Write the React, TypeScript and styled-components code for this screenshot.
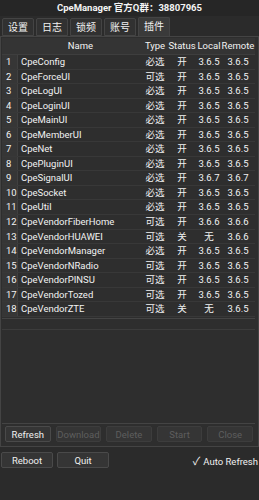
import React from "react";
import styled, { createGlobalStyle } from "styled-components";

interface PluginRow {
  name: string;
  type: string;
  status: string;
  local: string;
  remote: string;
}

const PLUGINS: PluginRow[] = [
  { name: "CpeConfig", type: "必选", status: "开", local: "3.6.5", remote: "3.6.5" },
  { name: "CpeForceUI", type: "可选", status: "开", local: "3.6.5", remote: "3.6.5" },
  { name: "CpeLogUI", type: "必选", status: "开", local: "3.6.5", remote: "3.6.5" },
  { name: "CpeLoginUI", type: "必选", status: "开", local: "3.6.5", remote: "3.6.5" },
  { name: "CpeMainUI", type: "必选", status: "开", local: "3.6.5", remote: "3.6.5" },
  { name: "CpeMemberUI", type: "必选", status: "开", local: "3.6.5", remote: "3.6.5" },
  { name: "CpeNet", type: "必选", status: "开", local: "3.6.5", remote: "3.6.5" },
  { name: "CpePluginUI", type: "必选", status: "开", local: "3.6.5", remote: "3.6.5" },
  { name: "CpeSignalUI", type: "必选", status: "开", local: "3.6.7", remote: "3.6.7" },
  { name: "CpeSocket", type: "必选", status: "开", local: "3.6.5", remote: "3.6.5" },
  { name: "CpeUtil", type: "必选", status: "开", local: "3.6.5", remote: "3.6.5" },
  { name: "CpeVendorFiberHome", type: "可选", status: "开", local: "3.6.6", remote: "3.6.6" },
  { name: "CpeVendorHUAWEI", type: "可选", status: "关", local: "无", remote: "3.6.6" },
  { name: "CpeVendorManager", type: "必选", status: "开", local: "3.6.5", remote: "3.6.5" },
  { name: "CpeVendorNRadio", type: "可选", status: "开", local: "3.6.5", remote: "3.6.5" },
  { name: "CpeVendorPINSU", type: "可选", status: "开", local: "3.6.5", remote: "3.6.5" },
  { name: "CpeVendorTozed", type: "可选", status: "开", local: "3.6.5", remote: "3.6.5" },
  { name: "CpeVendorZTE", type: "可选", status: "关", local: "无", remote: "3.6.5" },
];

const TABS = ["设置", "日志", "锁频", "账号", "插件"];
const ACTIONS = [
  { label: "Refresh", enabled: true },
  { label: "Download", enabled: false },
  { label: "Delete", enabled: false },
  { label: "Start", enabled: false },
  { label: "Close", enabled: false },
];

export default function App() {
  return (
    <>
      <GlobalStyle />
      <Window>
        <TitleBar>CpeManager 官方Q群：38807965</TitleBar>
        <TabBar>
          {TABS.map((t) => (
            <Tab key={t} active={t === "插件"}>
              {t}
            </Tab>
          ))}
        </TabBar>
        <Panel>
          <TableBox>
            <HeaderRow>
              <HeadCell />
              <HeadCell>Name</HeadCell>
              <HeadCell>Type</HeadCell>
              <HeadCell>Status</HeadCell>
              <HeadCell>Local</HeadCell>
              <HeadCell>Remote</HeadCell>
            </HeaderRow>
            {PLUGINS.map((p, i) => (
              <Row key={p.name}>
                <IndexCell>{i + 1}</IndexCell>
                <NameCell>{p.name}</NameCell>
                <Cell>{p.type}</Cell>
                <Cell>{p.status}</Cell>
                <Cell>{p.local}</Cell>
                <Cell>{p.remote}</Cell>
              </Row>
            ))}
          </TableBox>
          <DetailBox />
          <ActionRow>
            {ACTIONS.map((a) => (
              <Button key={a.label} disabled={!a.enabled}>
                {a.label}
              </Button>
            ))}
          </ActionRow>
        </Panel>
        <BottomBar>
          <Button wide>Reboot</Button>
          <Button wide>Quit</Button>
          <Spacer />
          <AutoRefresh>
            <Check>✓</Check>Auto Refresh
          </AutoRefresh>
        </BottomBar>
      </Window>
    </>
  );
}

const GlobalStyle = createGlobalStyle`
  body {
    margin: 0;
    background-color: #2b2b2b;
    font-family: Roboto, "Noto Sans", "Noto Sans CJK SC", sans-serif;
    color: #f2f2f2;
  }
`;

const Window = styled.div`
  width: 259px;
  height: 500px;
  display: flex;
  flex-direction: column;
  background-color: #2b2b2b;
  overflow: hidden;
`;

const TitleBar = styled.div`
  height: 16px;
  line-height: 16px;
  text-align: center;
  font-size: 9.5px;
  font-weight: 700;
  color: #f4f4f4;
  background-color: #262626;
`;

const TabBar = styled.div`
  display: flex;
  align-items: flex-end;
  gap: 2px;
  height: 20px;
  padding: 0 2px;
`;

const Tab = styled.div<{ active?: boolean }>`
  height: ${(p) => (p.active ? "19px" : "18px")};
  line-height: 18px;
  padding: 0 5px;
  font-size: 10px;
  color: #f0f0f0;
  background-color: ${(p) => (p.active ? "#3a3a3a" : "#313131")};
  border: 1px solid #444;
  border-bottom: ${(p) => (p.active ? "none" : "1px solid #444")};
  box-sizing: border-box;
  border-radius: 2px 2px 0 0;
`;

const Panel = styled.div`
  height: 411px;
  display: flex;
  flex-direction: column;
  border: 1px solid #444;
  background-color: #2e2e2e;
  box-sizing: border-box;
`;

const TableBox = styled.div`
  margin: 1px 3px 0 1px;
  border-bottom: 1px solid #444;
  height: 281px;
  box-sizing: border-box;
  background-color: #2e2e2e;
`;

const cols = "16px 125px 24px 30px 24px 1fr";

const HeaderRow = styled.div`
  display: grid;
  grid-template-columns: ${cols};
  height: 16px;
  background-color: #343434;
  border-bottom: 1px solid #3e3e3e;
`;

const HeadCell = styled.div`
  font-size: 9.5px;
  line-height: 16px;
  text-align: center;
  white-space: nowrap;
  color: #f2f2f2;
`;

const Row = styled.div`
  display: grid;
  grid-template-columns: ${cols};
  height: 14.55px;
  border-bottom: 1px solid #383838;
  box-sizing: border-box;
`;

const IndexCell = styled.div`
  font-size: 9.5px;
  line-height: 13.5px;
  padding-left: 4px;
  background-color: #363636;
  border-right: 1px solid #404040;
`;

const NameCell = styled.div`
  font-size: 9.5px;
  line-height: 13.5px;
  padding-left: 3px;
  white-space: nowrap;
`;

const Cell = styled.div`
  font-size: 9.5px;
  line-height: 13.5px;
  text-align: center;
  white-space: nowrap;
`;

const DetailBox = styled.div`
  flex: 1;
  margin: 10px 3px 2px 1px;
  border-top: 1px solid #3c3c3c;
  border-bottom: 1px solid #444;
`;

const ActionRow = styled.div`
  display: flex;
  gap: 5px;
  padding: 0 5px 4px 4px;
`;

const Button = styled.button<{ wide?: boolean }>`
  flex: ${(p) => (p.wide ? "0 0 52px" : "1")};
  height: 16px;
  padding: 0;
  font-family: Roboto, "Noto Sans", sans-serif;
  font-size: 9.5px;
  color: ${(p) => (p.disabled ? "#5e5e5e" : "#f0f0f0")};
  background-color: #353535;
  border: 1px solid ${(p) => (p.disabled ? "#3d3d3d" : "#4a4a4a")};
  border-radius: 2px;
`;

const BottomBar = styled.div`
  display: flex;
  align-items: center;
  gap: 4px;
  padding: 5px 1px 0 1px;
`;

const Spacer = styled.div`
  flex: 1;
`;

const AutoRefresh = styled.div`
  font-size: 9.5px;
  white-space: nowrap;
  color: #f0f0f0;
`;

const Check = styled.span`
  font-size: 11px;
  margin-right: 3px;
`;
